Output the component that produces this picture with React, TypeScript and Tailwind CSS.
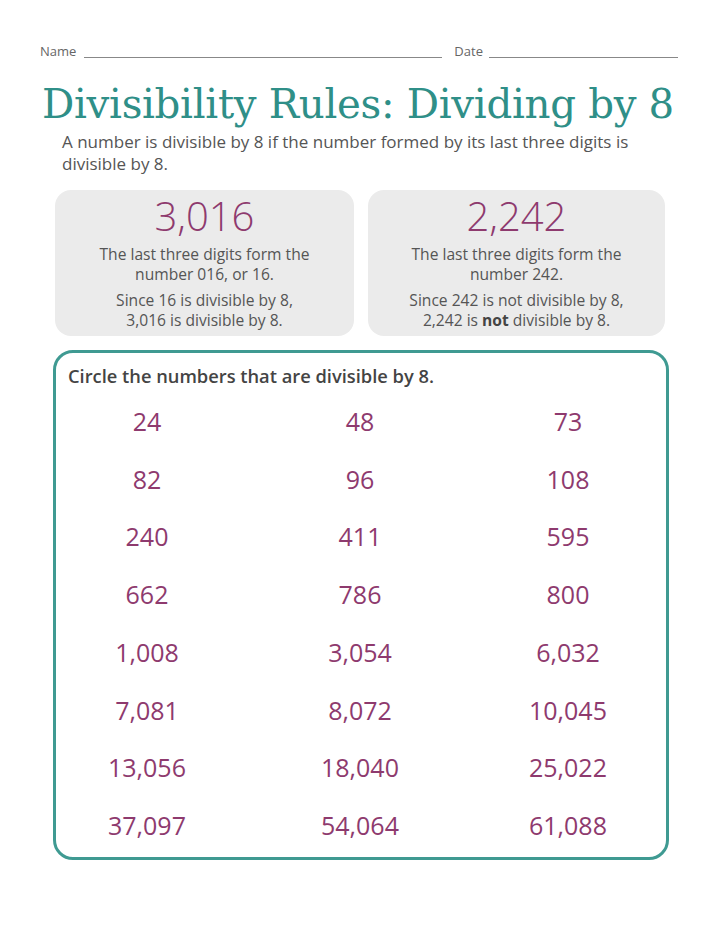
import React from "react";

const rows: string[][] = [
  ["24", "48", "73"],
  ["82", "96", "108"],
  ["240", "411", "595"],
  ["662", "786", "800"],
  ["1,008", "3,054", "6,032"],
  ["7,081", "8,072", "10,045"],
  ["13,056", "18,040", "25,022"],
  ["37,097", "54,064", "61,088"],
];

export default function App() {
  return (
    <div className="w-[720px] h-[933px] bg-white relative" style={{ fontFamily: '"Open Sans", "Noto Sans", sans-serif' }}>
      <div className="pt-[44px] pl-[40px] pr-[42px] flex items-end text-[13px] text-[#666]">
        <span className="leading-[15px]">Name</span>
        <div className="ml-[8px] w-[358px] border-b border-[#888] mb-[1px]"></div>
        <span className="ml-[12px] leading-[15px]">Date</span>
        <div className="ml-[6px] flex-1 border-b border-[#888] mb-[1px]"></div>
      </div>
      <h1
        className="mt-[23px] pl-[42px] text-[40.3px] leading-[46px] text-[#2f8f88] whitespace-nowrap tracking-[-0.3px]"
        style={{ fontFamily: '"DejaVu Serif", serif' }}
      >
        Divisibility Rules: Dividing by 8
      </h1>
      <p className="mt-[3px] ml-[62px] w-[600px] text-[17px] leading-[22px] text-[#555]">
        A number is divisible by 8 if the number formed by its last three digits is divisible by 8.
      </p>
      <div className="mt-[15px] ml-[55px] mr-[55px] flex gap-[14px]">
        <div className="w-[299px] h-[146px] rounded-[16px] bg-[#ebebeb] flex flex-col items-center pt-[3px] text-[15.6px] leading-[20px] text-[#555]">
          <div className="text-[40px] leading-[46px] font-light text-[#8e3a6e]">3,016</div>
          <div className="mt-[5px] text-center">The last three digits form the<br />number 016, or 16.</div>
          <div className="mt-[6px] text-center">Since 16 is divisible by 8,<br />3,016 is divisible by 8.</div>
        </div>
        <div className="w-[297px] h-[146px] rounded-[16px] bg-[#ebebeb] flex flex-col items-center pt-[3px] text-[15.6px] leading-[20px] text-[#555]">
          <div className="text-[40px] leading-[46px] font-light text-[#8e3a6e]">2,242</div>
          <div className="mt-[5px] text-center">The last three digits form the<br />number 242.</div>
          <div className="mt-[6px] text-center">Since 242 is not divisible by 8,<br />2,242 is <b className="font-bold text-[#444]">not</b> divisible by 8.</div>
        </div>
      </div>
      <div className="mt-[14px] ml-[53px] w-[616px] h-[510px] rounded-[20px] border-[3px] border-[#3f9a92] pt-[12px]">
        <div className="pl-[12px] text-[18.3px] leading-[22px] font-semibold text-[#444]">Circle the numbers that are divisible by 8.</div>
        <div className="mt-[6px] grid grid-cols-[182px_244px_172px] text-[25px] text-[#8e3a6e]">
          {rows.map((r, i) => (
            <React.Fragment key={i}>
              {r.map((n, j) => (
                <div key={j} className="h-[57.7px] flex items-center justify-center">{n}</div>
              ))}
            </React.Fragment>
          ))}
        </div>
      </div>
    </div>
  );
}
